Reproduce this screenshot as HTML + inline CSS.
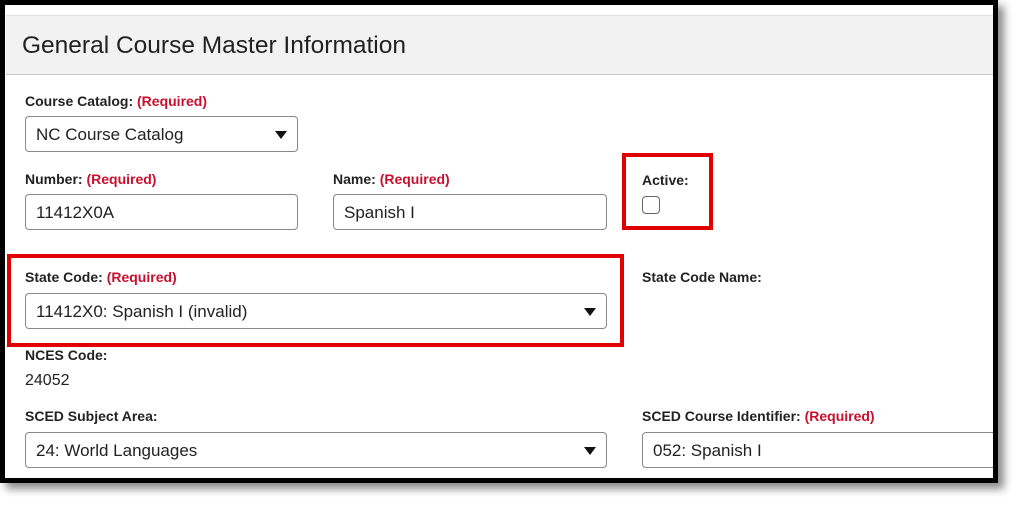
<!DOCTYPE html><html><head><style>
body{margin:0;width:1024px;height:509px;background:#fff;position:relative;overflow:hidden;font-family:"Liberation Sans",Arial,sans-serif}
.frame{position:absolute;left:0;top:0;width:988px;height:473px;border:5px solid #000;background:#fff;box-shadow:6px 6px 8px rgba(0,0,0,.45);overflow:hidden}
.hdr{position:absolute;left:1px;top:10px;width:990px;height:58px;background:#f2f2f2;border-top:1px solid #e0e0e0;border-bottom:1px solid #c8c8c8}
.hdr span{position:absolute;left:16px;top:16px;font-size:24.5px;color:#222}
.l{position:absolute;font-size:14px;font-weight:bold;color:#222}
.l b{color:#c8102e}
.in{position:absolute;height:36px;border:1px solid #888;border-radius:4px;box-sizing:border-box;font-size:17px;color:#222;padding:8px 0 0 10px;background:#fff}
.in i{position:absolute;right:10px;top:14px;width:0;height:0;border-left:6px solid transparent;border-right:6px solid transparent;border-top:8px solid #111}
.t{position:absolute;font-size:16px;color:#222}
.red{position:absolute;border:4px solid #e00000;box-sizing:border-box}
</style></head><body>
<div class="frame">
<div class="hdr"><span>General Course Master Information</span></div>
<div class="l" style="left:20px;top:88px">Course Catalog: <b>(Required)</b></div>
<div class="in" style="left:20px;top:111px;width:273px">NC Course Catalog<i></i></div>
<div class="l" style="left:20px;top:166px">Number: <b>(Required)</b></div>
<div class="in" style="left:20px;top:189px;width:273px">11412X0A</div>
<div class="l" style="left:328px;top:166px">Name: <b>(Required)</b></div>
<div class="in" style="left:328px;top:189px;width:274px">Spanish I</div>
<div class="red" style="left:617px;top:148px;width:91px;height:77px"></div>
<div class="l" style="left:637px;top:167px">Active:</div>
<div style="position:absolute;left:637px;top:191px;width:18px;height:18px;border:1px solid #666;border-radius:4px;box-sizing:border-box"></div>
<div class="red" style="left:2px;top:249px;width:617px;height:93px"></div>
<div class="l" style="left:20px;top:264px">State Code: <b>(Required)</b></div>
<div class="in" style="left:20px;top:288px;width:582px">11412X0: Spanish I (invalid)<i></i></div>
<div class="l" style="left:637px;top:264px">State Code Name:</div>
<div class="l" style="left:20px;top:342px">NCES Code:</div>
<div class="t" style="left:20px;top:367px">24052</div>
<div class="l" style="left:20px;top:403px">SCED Subject Area:</div>
<div class="in" style="left:20px;top:427px;width:582px">24: World Languages<i></i></div>
<div class="l" style="left:637px;top:403px">SCED Course Identifier: <b>(Required)</b></div>
<div class="in" style="left:637px;top:427px;width:400px">052: Spanish I</div>
</div>
</body></html>
